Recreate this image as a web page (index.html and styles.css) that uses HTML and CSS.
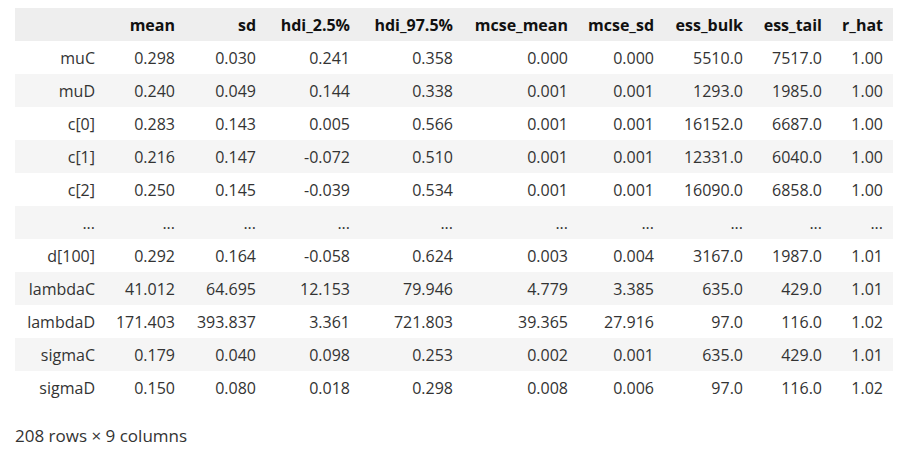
FILE: index.html
```html
<!DOCTYPE html>
<html>
<head>
<meta charset="utf-8">
<link rel="stylesheet" href="styles.css">
</head>
<body>
<div class="output">
<table class="dataframe">
<colgroup>
<col class="c-idx"><col class="c-mean"><col class="c-sd"><col class="c-h1"><col class="c-h2"><col class="c-mm"><col class="c-ms"><col class="c-eb"><col class="c-et"><col class="c-rh">
</colgroup>
<thead>
<tr><th></th><th>mean</th><th>sd</th><th>hdi_2.5%</th><th>hdi_97.5%</th><th>mcse_mean</th><th>mcse_sd</th><th>ess_bulk</th><th>ess_tail</th><th>r_hat</th></tr>
</thead>
<tbody>
<tr><th>muC</th><td>0.298</td><td>0.030</td><td>0.241</td><td>0.358</td><td>0.000</td><td>0.000</td><td>5510.0</td><td>7517.0</td><td>1.00</td></tr>
<tr><th>muD</th><td>0.240</td><td>0.049</td><td>0.144</td><td>0.338</td><td>0.001</td><td>0.001</td><td>1293.0</td><td>1985.0</td><td>1.00</td></tr>
<tr><th>c[0]</th><td>0.283</td><td>0.143</td><td>0.005</td><td>0.566</td><td>0.001</td><td>0.001</td><td>16152.0</td><td>6687.0</td><td>1.00</td></tr>
<tr><th>c[1]</th><td>0.216</td><td>0.147</td><td>-0.072</td><td>0.510</td><td>0.001</td><td>0.001</td><td>12331.0</td><td>6040.0</td><td>1.00</td></tr>
<tr><th>c[2]</th><td>0.250</td><td>0.145</td><td>-0.039</td><td>0.534</td><td>0.001</td><td>0.001</td><td>16090.0</td><td>6858.0</td><td>1.00</td></tr>
<tr><th>...</th><td>...</td><td>...</td><td>...</td><td>...</td><td>...</td><td>...</td><td>...</td><td>...</td><td>...</td></tr>
<tr><th>d[100]</th><td>0.292</td><td>0.164</td><td>-0.058</td><td>0.624</td><td>0.003</td><td>0.004</td><td>3167.0</td><td>1987.0</td><td>1.01</td></tr>
<tr><th>lambdaC</th><td>41.012</td><td>64.695</td><td>12.153</td><td>79.946</td><td>4.779</td><td>3.385</td><td>635.0</td><td>429.0</td><td>1.01</td></tr>
<tr><th>lambdaD</th><td>171.403</td><td>393.837</td><td>3.361</td><td>721.803</td><td>39.365</td><td>27.916</td><td>97.0</td><td>116.0</td><td>1.02</td></tr>
<tr><th>sigmaC</th><td>0.179</td><td>0.040</td><td>0.098</td><td>0.253</td><td>0.002</td><td>0.001</td><td>635.0</td><td>429.0</td><td>1.01</td></tr>
<tr><th>sigmaD</th><td>0.150</td><td>0.080</td><td>0.018</td><td>0.298</td><td>0.008</td><td>0.006</td><td>97.0</td><td>116.0</td><td>1.02</td></tr>
</tbody>
</table>
<p class="shape">208 rows × 9 columns</p>
</div>
</body>
</html>
```

FILE: styles.css
```css
html, body {
  margin: 0;
  padding: 0;
  background: #ffffff;
}
body {
  font-family: "Open Sans", "Noto Sans", sans-serif;
  font-size: 16px;
  color: #333333;
}
.output {
  padding: 8px 12px 0 15px;
}
.dataframe {
  border-collapse: collapse;
  border-spacing: 0;
  table-layout: fixed;
  width: 878px;
}
.c-idx { width: 90px; }
.c-mean { width: 80px; }
.c-sd { width: 81px; }
.c-h1 { width: 94px; }
.c-h2 { width: 103px; }
.c-mm { width: 115px; }
.c-ms { width: 86px; }
.c-eb { width: 89px; }
.c-et { width: 79px; }
.c-rh { width: 61px; }
.dataframe th,
.dataframe td {
  height: 33px;
  padding: 0 10px 0 0;
  text-align: right;
  vertical-align: middle;
  white-space: nowrap;
  box-sizing: border-box;
  line-height: 20px;
}
.dataframe thead tr {
  background: #eeeeee;
}
.dataframe thead th {
  font-weight: 700;
  color: #111111;
}
.dataframe tbody th {
  font-weight: 400;
}
.dataframe tbody tr:nth-child(even) {
  background: #f5f5f5;
}
.shape {
  margin: 21px 0 0 0;
  font-size: 17px;
  line-height: 22px;
}
```
